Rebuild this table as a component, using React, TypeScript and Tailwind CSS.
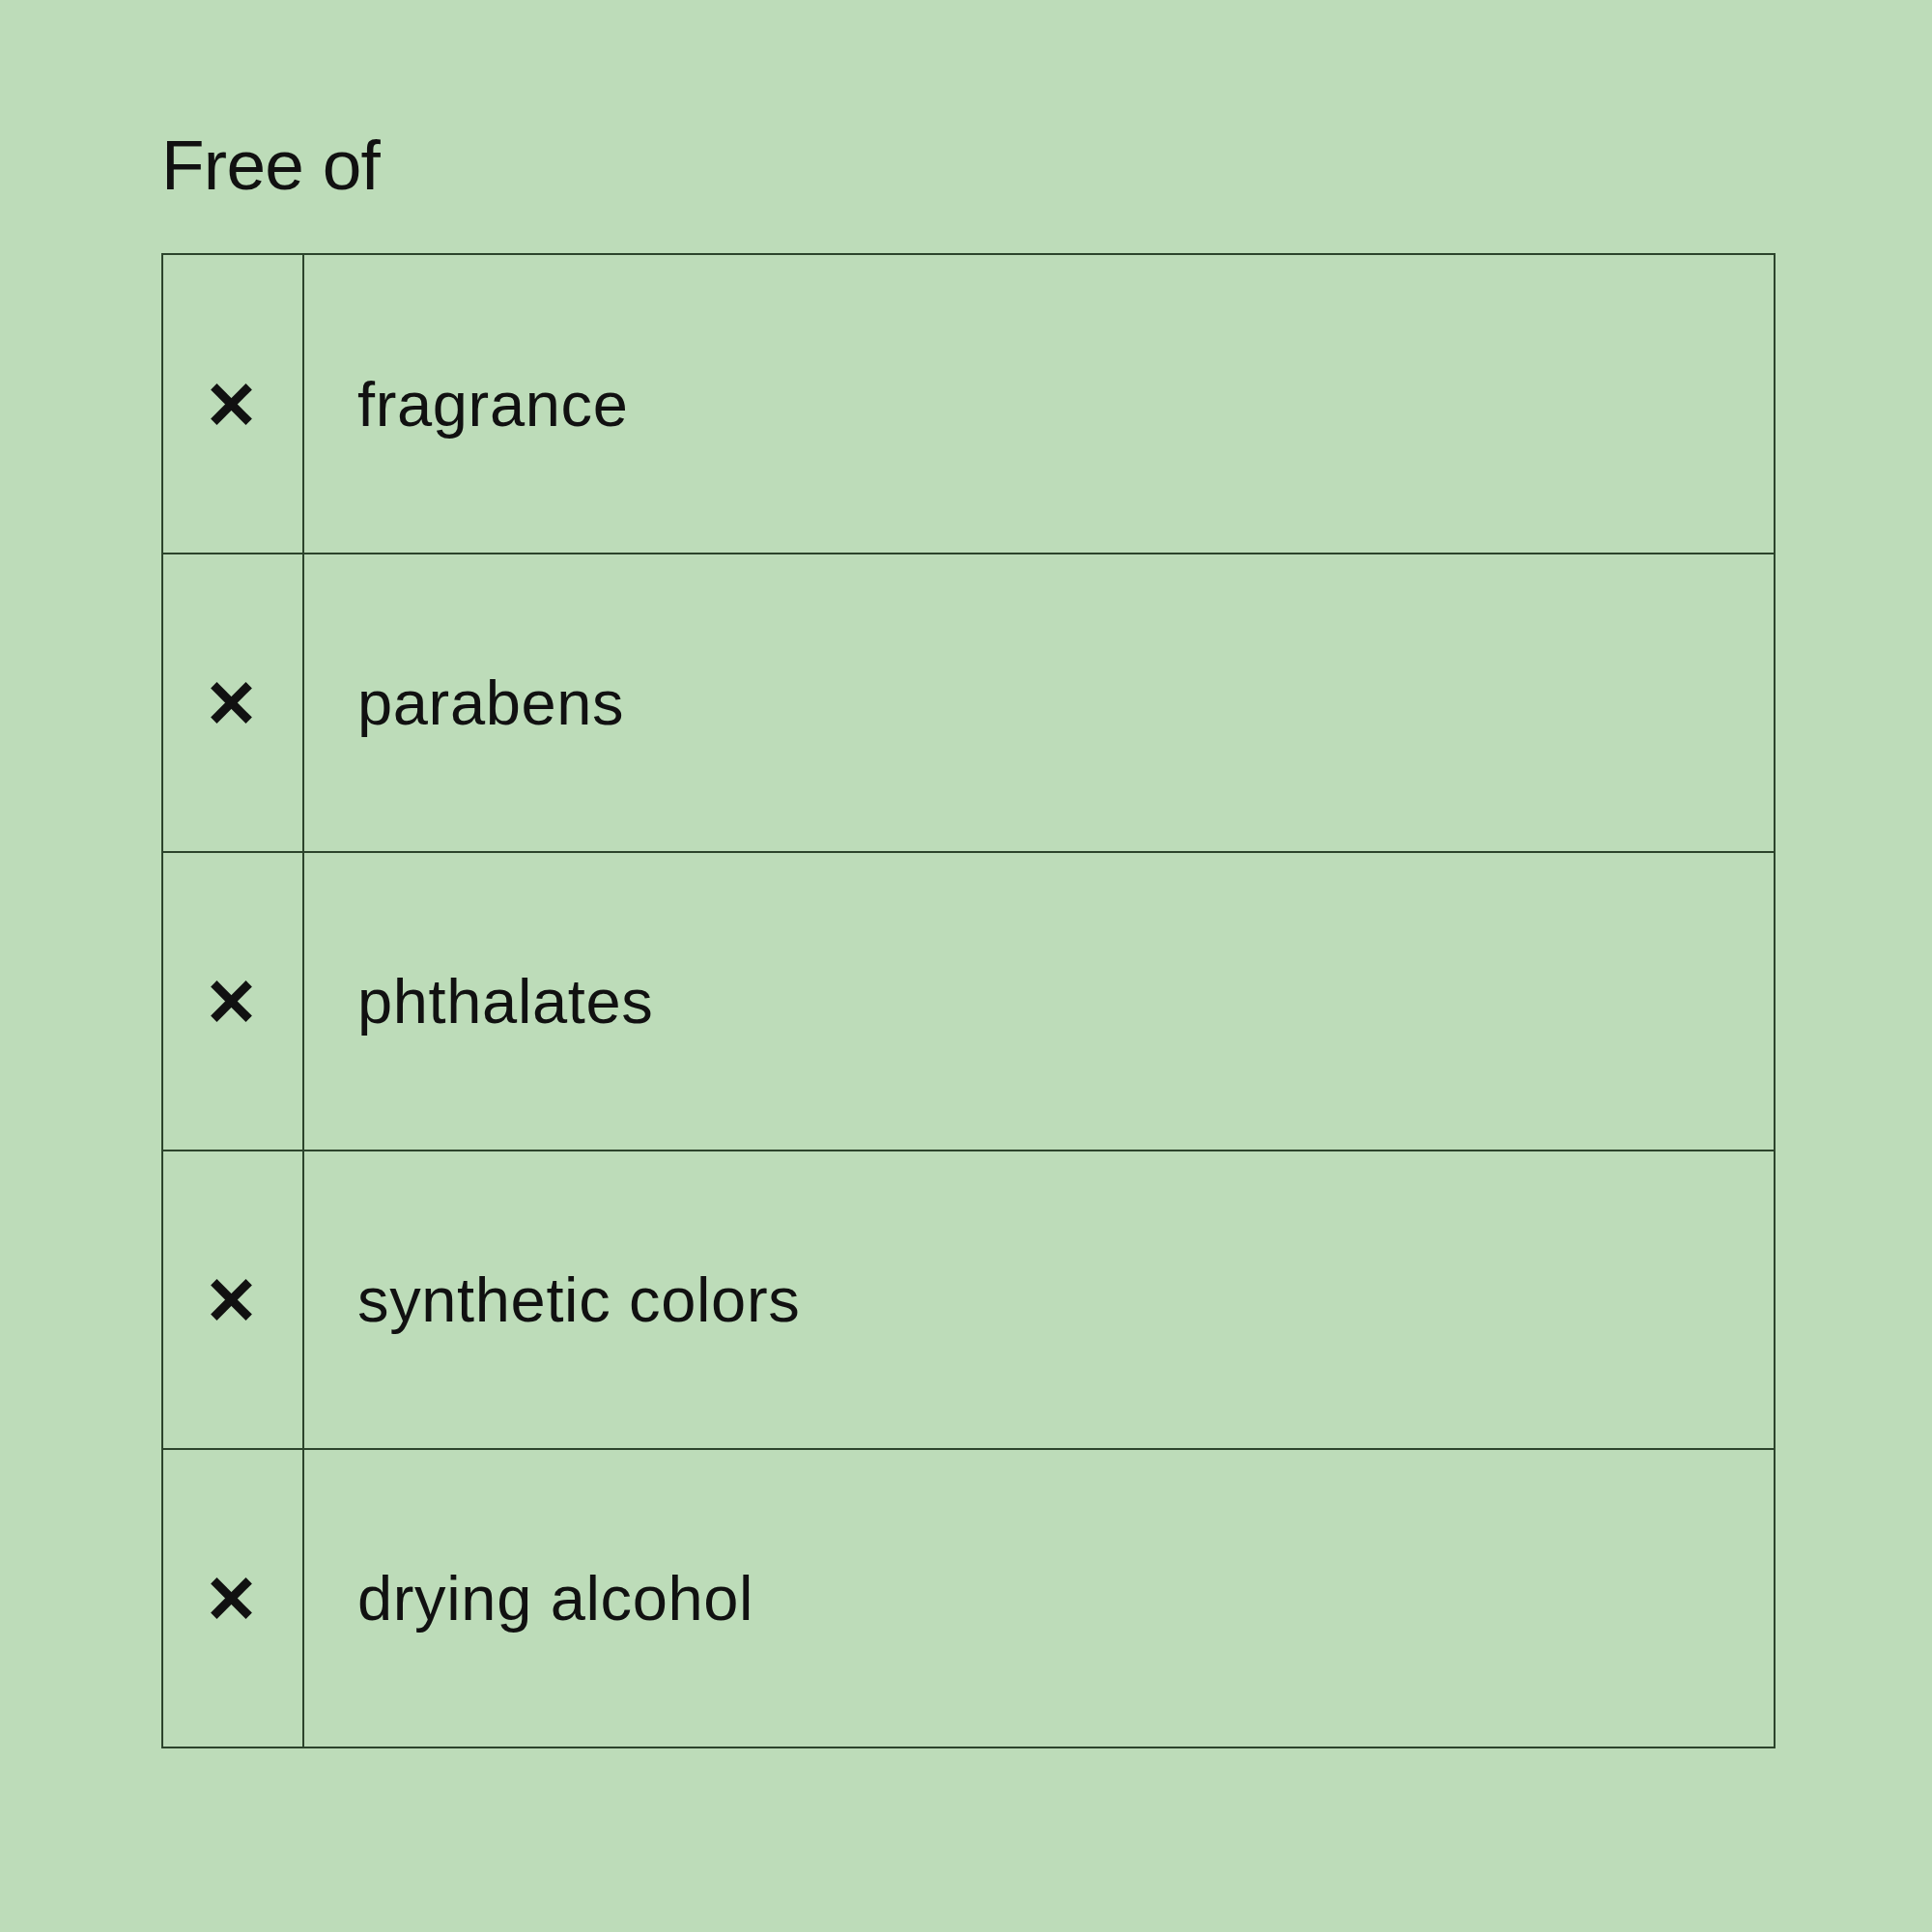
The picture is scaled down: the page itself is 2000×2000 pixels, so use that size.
import React from "react";

const items = [
  "fragrance",
  "parabens",
  "phthalates",
  "synthetic colors",
  "drying alcohol",
];

// bold cross mark drawn as two strokes
const Cross = () => (
  <svg width="43" height="43" viewBox="0 0 43 43" fill="none">
    <line x1="3.3" y1="3.3" x2="39.7" y2="39.7" stroke="#111" strokeWidth="9" />
    <line x1="39.7" y1="3.3" x2="3.3" y2="39.7" stroke="#111" strokeWidth="9" />
  </svg>
);

const App = () => {
  return (
    <div
      className="w-[2000px] h-[2000px] bg-[#bddcb9] pl-[167px] pt-[134px] text-[#111]"
      style={{ fontFamily: '"Liberation Sans", Arial, sans-serif' }}
    >
      <h1 className="text-[73px] leading-none tracking-[-0.01em] font-normal">
        Free of
      </h1>

      <div className="mt-[55px] w-[1671px] border-2 border-[#2c442c]">
        {items.map((item, i) => (
          <div
            key={item}
            className={`flex ${i > 0 ? "h-[309px] border-t-2 border-[#2c442c]" : "h-[308px]"}`}
          >
            <div className="w-[146px] shrink-0 border-r-2 border-[#2c442c] flex items-center pl-[49px]">
              <Cross />
            </div>
            <div className="flex-1 flex items-center pl-[55px] text-[65px] leading-none tracking-[0.01em]">
              {item}
            </div>
          </div>
        ))}
      </div>
    </div>
  );
};

export default App;
